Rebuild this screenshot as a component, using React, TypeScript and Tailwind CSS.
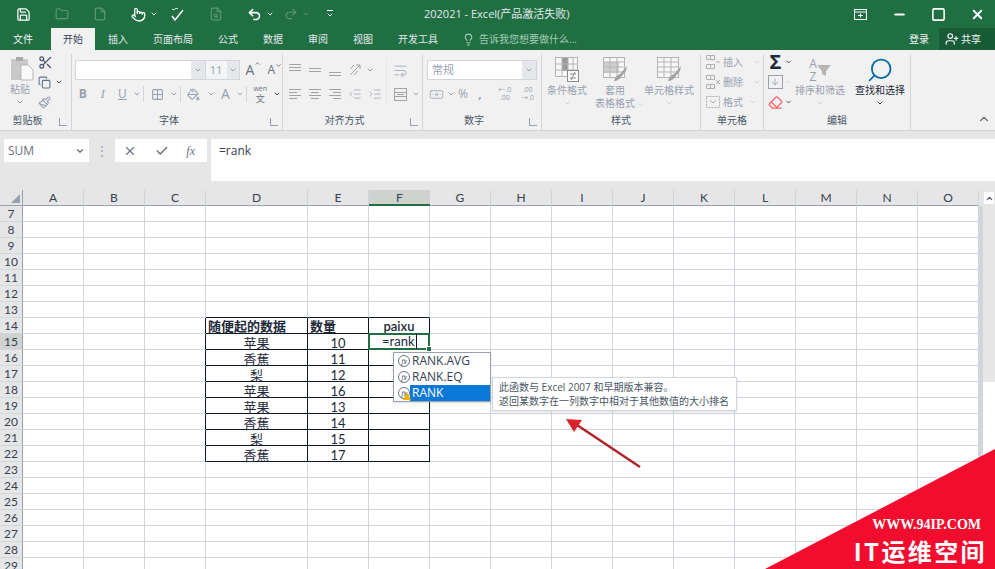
import React from 'react';
import {
  Save, Folder, File, Pointer, FileSearch, Undo2, Redo2, ChevronDown, Lightbulb, Minus, Square, X,
  UserPlus, Scissors, Copy, Paintbrush, Grid2x2, PaintBucket, Indent, Outdent, WrapText, Banknote, Check,
  Eraser, Search, ChevronUp, ArrowDown,
} from 'lucide-react';

const font = { fontFamily: '"Open Sans", "Noto Sans CJK SC", sans-serif' };
const sheetFont = { fontFamily: 'Lato, "Noto Sans CJK SC", sans-serif' };

const columns = ['A', 'B', 'C', 'D', 'E', 'F', 'G', 'H', 'I', 'J', 'K', 'L', 'M', 'N', 'O'];
const rows = Array.from({ length: 23 }, (_, i) => i + 7);

const tableData: Record<number, string[]> = {
  14: ['随便起的数据', '数量', 'paixu'],
  15: ['苹果', '10', ''],
  16: ['香蕉', '11', ''],
  17: ['梨', '12', ''],
  18: ['苹果', '16', ''],
  19: ['苹果', '13', ''],
  20: ['香蕉', '14', ''],
  21: ['梨', '15', ''],
  22: ['香蕉', '17', ''],
};

const tabs = ['插入', '页面布局', '公式', '数据', '审阅', '视图', '开发工具'];

function Caret({ className = 'text-gray-400' }: { className?: string }) {
  return <ChevronDown size={8} strokeWidth={3} className={className} />;
}

// small horizontal line icon used by the alignment buttons
function Lines({ items }: { items: number[][] }) {
  return (
    <svg width="14" height="14" viewBox="0 0 14 14" stroke="#a3a3a3" strokeWidth="1">
      {items.map(([x1, x2, y]) => (
        <line key={`${x1}-${x2}-${y}`} x1={x1} x2={x2} y1={y} y2={y} />
      ))}
    </svg>
  );
}

function PasteIcon() {
  return (
    <svg width="24" height="25" viewBox="0 0 24 25">
      <rect x="1" y="3" width="17" height="21" fill="#c9c9c9" />
      <rect x="6" y="1" width="7" height="4" fill="#a9a9a9" />
      <path d="M11 9h7l5 5v10H11z" fill="#fafafa" stroke="#b5b5b5" />
    </svg>
  );
}

function CondIcon() {
  return (
    <svg width="26" height="27" viewBox="0 0 26 27" stroke="#b5b5b5" fill="none">
      <rect x="1.5" y="1.5" width="22" height="19" fill="#f7f7f7" />
      <rect x="8" y="2" width="6" height="13" fill="#9a9a9a" stroke="none" />
      <path d="M8 1.5v19M14 1.5v19M19 1.5v19M1.5 8h22M1.5 14h22" />
      <rect x="13.5" y="14.5" width="11" height="11" fill="#fafafa" stroke="#8c8c8c" />
      <path d="M16 18h6M16 22h6M21 16l-4 8" stroke="#8c8c8c" />
    </svg>
  );
}

function StyleIcon({ filled = false }: { filled?: boolean }) {
  return (
    <svg width="26" height="27" viewBox="0 0 26 27" stroke="#b5b5b5" fill="none">
      <rect x="1.5" y="1.5" width="21" height="20" fill="#f7f7f7" />
      {filled && <rect x="2" y="6" width="15" height="11" fill="#cfcfcf" stroke="none" />}
      <path d="M1.5 6h21M1.5 11h21M1.5 16h21M8 1.5v20M15 1.5v20" />
      <path d="M12 25c1-4 3-6 6-7l7-8-1 5-5 6c-1 2-4 4-7 4z" fill="#a3a3a3" stroke="none" />
    </svg>
  );
}

function CellIcon({ mark }: { mark: 'insert' | 'delete' | 'format' }) {
  return (
    <svg width="16" height="16" viewBox="0 0 16 16" stroke="#b0b0b0" fill="none">
      {mark === 'format' ? (
        <>
          <rect x="1.5" y="2.5" width="13" height="11" strokeDasharray="2 1" />
          <path d="M5 6l3 3 3-3" />
        </>
      ) : (
        <>
          <path d="M1.5 1.5h8v4h-8zM5.5 1.5v4M1.5 10.5h8v4h-8zM5.5 10.5v4" />
          {mark === 'insert' ? <path d="M11 8h4" /> : <path d="M11 6l4 4M15 6l-4 4" />}
        </>
      )}
    </svg>
  );
}

function TitleBar() {
  return (
    <div className="flex h-7 items-center bg-[#1f6f43] text-white">
      <div className="flex w-96 items-center">
        <Save size={15} className="ml-4" />
        <Folder size={14} className="ml-6 text-[#5b9877]" />
        <File size={14} className="ml-6 text-[#5b9877]" />
        <Pointer size={15} className="ml-6" />
        <Caret className="ml-1 text-white" />
        <svg width="15" height="15" viewBox="0 0 15 15" fill="none" stroke="currentColor" strokeWidth="1.5" className="ml-3">
          <path d="M2 9l3 4 8-10" />
          <path d="M2 3c1-2 2 1 3-1s2 1 3-1" strokeWidth="1" />
        </svg>
        <FileSearch size={14} className="ml-6 text-[#5b9877]" />
        <Undo2 size={15} strokeWidth={2.5} className="ml-6" />
        <Caret className="ml-1 text-white" />
        <Redo2 size={14} className="ml-2.5 text-[#5b9877]" />
        <Caret className="ml-1 text-[#5b9877]" />
        <span className="ml-4 flex flex-col items-center">
          <span className="h-px w-1.5 bg-white" />
          <Caret className="text-white" />
        </span>
      </div>
      <div className="flex-1 pl-10 text-[11px] text-gray-200">202021 - Excel(产品激活失败)</div>
      <div className="flex items-center gap-6 pr-2.5">
        <svg width="15" height="15" viewBox="0 0 15 15" fill="none" stroke="currentColor">
          <rect x="1.5" y="2.5" width="12" height="10" />
          <path d="M1.5 5h12M5 8.5h5M7.5 6.5v4" />
        </svg>
        <Minus size={15} strokeWidth={3} />
        <Square size={15} strokeWidth={2.5} />
        <X size={15} strokeWidth={3} />
      </div>
    </div>
  );
}

function TabBar() {
  return (
    <div className="flex h-[22px] bg-[#1f6f43] text-[10px] text-gray-100">
      <span className="ml-px flex items-center px-3">文件</span>
      <span className="ml-1.5 flex items-center bg-[#f1f1f1] px-3 text-gray-700">开始</span>
      {tabs.map((t) => (
        <span key={t} className="ml-px flex items-center px-3 text-gray-200">{t}</span>
      ))}
      <span className="ml-3 flex items-center gap-1 text-[#a5cbb5]">
        <Lightbulb size={13} />
        告诉我您想要做什么...
      </span>
      <span className="ml-auto flex items-center pr-2.5">登录</span>
      <span className="flex w-14 items-center gap-0.5 bg-[#185c37] pl-1.5">
        <UserPlus size={14} />
        共享
      </span>
    </div>
  );
}

function Group({ width, label, launcher = false, children }: { width: string; label: string; launcher?: boolean; children: React.ReactNode }) {
  return (
    <div className={`flex shrink-0 flex-col border-r border-gray-300 ${width}`}>
      <div className="h-14">{children}</div>
      <div className={`relative flex h-5 items-center justify-center text-[10px] text-gray-600 ${launcher ? 'pr-4' : ''}`}>
        {label}
        {launcher && <span className="absolute right-1 bottom-1 h-2 w-2 border-b border-l border-gray-400" />}
      </div>
    </div>
  );
}

function BigButton({ icon, lines, className = '', dark = false }: { icon: React.ReactNode; lines: string[]; className?: string; dark?: boolean }) {
  const twoLines = lines.length > 1;
  return (
    <div className={`flex flex-col items-center pt-0.5 text-[10px] leading-[13px] whitespace-nowrap ${dark ? 'text-gray-800' : 'text-gray-400'} ${className}`}>
      <div className="flex h-[27px] items-center">{icon}</div>
      <div className="mt-px flex flex-col items-center">
        {lines.map((l, i) => (
          <span key={l} className="relative">
            {l}
            {twoLines && i === 1 && <Caret className="absolute top-1 -right-2.5 text-gray-300" />}
          </span>
        ))}
      </div>
      {!twoLines && <Caret className={dark ? 'mt-0.5 text-gray-700' : 'mt-0.5 text-gray-300'} />}
    </div>
  );
}

function Ribbon() {
  const slot = 'flex w-5 items-center justify-center';
  const smallCaret = 'flex w-2.5 items-center justify-center';
  return (
    <div className="flex h-[81px] border-b border-gray-300 bg-[#f1f1f1] pt-1 text-gray-400">
      <Group width="w-[72px]" label="剪贴板" launcher>
        <div className="flex pl-2.5 pt-0.5">
          <div className="flex w-7 flex-col items-start text-[10px] leading-[13px]">
            <PasteIcon />
            <span className="mt-0.5">粘贴</span>
            <Caret className="mt-0.5 ml-1.5 text-gray-400" />
          </div>
          <div className="-mt-1 flex flex-col">
            <span className="flex h-5 items-center"><Scissors size={15} className="text-slate-600" /></span>
            <span className="flex h-5 items-center gap-1"><Copy size={13} className="text-slate-500" /><Caret className="text-gray-600" /></span>
            <span className="flex h-5 items-center"><Paintbrush size={13} /></span>
          </div>
        </div>
      </Group>

      <Group width="w-[211px]" label="字体" launcher>
        <div className="flex flex-col gap-1 pt-1.5">
          <div className="flex h-5 items-center pl-[3px]">
            <span className="flex h-5 w-[132px] justify-end border border-gray-300 bg-white">
              <span className="flex w-3.5 items-center justify-center bg-gray-200"><Caret /></span>
            </span>
            <span className="flex h-5 w-[34px] items-center justify-between border-y border-r border-gray-300 bg-gray-100 pl-1 text-[11px]">
              11
              <span className="flex h-full w-3 items-center justify-center bg-gray-200"><Caret /></span>
            </span>
            <span className="ml-1.5 flex text-sm text-gray-500">A<ChevronUp size={7} strokeWidth={3} /></span>
            <span className="ml-1.5 flex text-xs text-gray-500">A<ChevronDown size={7} strokeWidth={3} /></span>
          </div>
          <div className="flex h-5 items-center pl-px text-xs text-gray-400">
            <b className={slot}>B</b>
            <i className={slot} style={{ fontFamily: '"Liberation Serif", serif' }}>I</i>
            <u className={slot}>U</u>
            <span className={smallCaret}><Caret /></span>
            <span className="mx-px h-4 border-l border-gray-300" />
            <span className="flex w-6 items-center justify-center"><Grid2x2 size={13} /></span>
            <span className={smallCaret}><Caret /></span>
            <span className="mx-px h-4 border-l border-gray-300" />
            <span className="flex w-6 items-center justify-center"><PaintBucket size={13} /></span>
            <span className={smallCaret}><Caret /></span>
            <span className={`${slot} text-sm`}>A</span>
            <span className={smallCaret}><Caret /></span>
            <span className="mx-px h-4 border-l border-gray-300" />
            <span className="flex w-6 flex-col items-center text-[7px] leading-[9px] text-gray-500">wén<span className="text-[9px] leading-[11px]">文</span></span>
            <span className={smallCaret}><Caret className="text-gray-600" /></span>
          </div>
        </div>
      </Group>

      <Group width="w-[140px]" label="对齐方式" launcher>
        <div className="flex pl-0.5 pt-1.5">
          <div className="flex flex-col gap-1">
            <div className="flex h-5 items-center">
              <span className={slot}><Lines items={[[1, 13, 1.5], [1, 13, 4.5], [1, 13, 7.5]]} /></span>
              <span className={slot}><Lines items={[[1, 13, 5.5], [1, 13, 8.5]]} /></span>
              <span className={slot}><Lines items={[[1, 13, 9.5], [1, 13, 12.5]]} /></span>
              <span className={slot}>
                <svg width="14" height="14" viewBox="0 0 14 14" stroke="#a3a3a3" fill="none">
                  <path d="M2 12L12 2M8 2h4v4" />
                  <path d="M2 6l4-4M6 12l4-4" />
                </svg>
              </span>
              <span className={smallCaret}><Caret /></span>
            </div>
            <div className="flex h-5 items-center">
              <span className={slot}><Lines items={[[1, 13, 2.5], [1, 9, 5.5], [1, 13, 8.5], [1, 9, 11.5]]} /></span>
              <span className={slot}><Lines items={[[1, 13, 2.5], [3, 11, 5.5], [1, 13, 8.5], [3, 11, 11.5]]} /></span>
              <span className={slot}><Lines items={[[1, 13, 2.5], [5, 13, 5.5], [1, 13, 8.5], [5, 13, 11.5]]} /></span>
              <span className={slot}><Outdent size={14} strokeWidth={1.25} /></span>
              <span className={slot}><Indent size={14} strokeWidth={1.25} /></span>
            </div>
          </div>
          <div className="ml-px flex flex-col gap-1 border-l border-gray-200 pl-1.5">
            <span className="flex h-5 items-center"><WrapText size={15} strokeWidth={1.25} /></span>
            <span className="flex h-5 items-center gap-1">
              <svg width="15" height="15" viewBox="0 0 15 15" stroke="#a3a3a3" fill="none">
                <rect x="1.5" y="1.5" width="12" height="12" />
                <path d="M1.5 5.5h12M1.5 9.5h12M4 7.5h7" />
              </svg>
              <Caret />
            </span>
          </div>
        </div>
      </Group>

      <Group width="w-[119px]" label="数字" launcher>
        <div className="flex flex-col gap-1 px-1 pt-1.5">
          <div className="flex h-5 items-center justify-between border border-gray-300 bg-white pl-1 text-[11px]">
            常规
            <span className="flex h-full w-3.5 items-center justify-center bg-gray-200"><Caret /></span>
          </div>
          <div className="flex h-5 items-center text-sm whitespace-nowrap">
            <span className={slot}><Banknote size={15} strokeWidth={1.25} /></span>
            <span className={smallCaret}><Caret /></span>
            <span className="w-4 text-center text-xs">%</span>
            <span className={`${slot} text-xs font-bold`}>,</span>
            <span className="ml-1.5 w-5 text-center text-[7px] leading-[8px]">←.0<br />.00</span>
            <span className="ml-1 w-5 text-center text-[7px] leading-[8px]">.00<br />→.0</span>
          </div>
        </div>
      </Group>

      <Group width="w-[159px]" label="样式">
        <div className="flex">
          <BigButton className="ml-px w-12" icon={<CondIcon />} lines={['条件格式']} />
          <BigButton className="w-12" icon={<StyleIcon filled />} lines={['套用', '表格格式']} />
          <BigButton className="ml-0.5 w-14" icon={<StyleIcon />} lines={['单元格样式']} />
        </div>
      </Group>

      <Group width="w-[63px]" label="单元格">
        <div className="-mt-0.5 flex flex-col pl-1 text-[10px] whitespace-nowrap">
          <span className="flex h-5 items-center gap-0.5"><CellIcon mark="insert" />插入<Caret className="ml-2 text-gray-300" /></span>
          <span className="flex h-5 items-center gap-0.5"><CellIcon mark="delete" />删除<Caret className="ml-2 text-gray-300" /></span>
          <span className="flex h-5 items-center gap-0.5"><CellIcon mark="format" />格式<Caret className="ml-1 text-gray-300" /></span>
        </div>
      </Group>

      <Group width="w-[147px]" label="编辑">
        <div className="flex">
          <div className="-mt-0.5 flex w-7 flex-col">
            <span className="flex h-5 items-center gap-0.5 pl-1">
              <span className="w-4 text-center text-xl leading-5 font-bold text-gray-800">Σ</span>
              <Caret className="text-gray-700" />
            </span>
            <span className="flex h-5 items-center gap-0.5 pl-1">
              <span className="flex h-3.5 w-4 items-center justify-center border border-gray-400"><ArrowDown size={10} /></span>
              <Caret className="text-gray-300" />
            </span>
            <span className="flex h-5 items-center gap-0.5 pl-1">
              <span className="flex w-4 justify-center"><Eraser size={15} className="text-red-400" /></span>
              <Caret className="text-gray-700" />
            </span>
          </div>
          <BigButton
            className="w-14"
            icon={
              <span className="flex items-center">
                <span className="text-center text-xs leading-[13px]">A<br />Z</span>
                <svg width="14" height="14" viewBox="0 0 14 14"><path d="M0 2h14L9 8v5l-4-2V8z" fill="#b5b5b5" /></svg>
              </span>
            }
            lines={['排序和筛选']}
          />
          <BigButton
            dark
            className="ml-1 w-14"
            icon={<Search size={28} strokeWidth={1.5} className="-scale-x-100 text-sky-700" />}
            lines={['查找和选择']}
          />
        </div>
      </Group>

      <div className="flex flex-1 items-end justify-end p-1">
        <ChevronUp size={14} className="text-gray-500" />
      </div>
    </div>
  );
}

function FormulaBar() {
  return (
    <div className="flex h-[59px] items-start gap-1 bg-[#e6e6e6] pl-1 pt-2">
      <div className="flex h-[23px] w-[85px] items-center justify-between bg-white pl-1 pr-1 text-xs text-gray-500">
        SUM
        <ChevronDown size={10} strokeWidth={3} />
      </div>
      <div className="flex h-[23px] w-[18px] items-center justify-center text-xs text-gray-400">⋮</div>
      <div className="flex h-[23px] w-[92px] items-center justify-between bg-white pl-2 pr-3 text-gray-500">
        <X size={14} />
        <Check size={14} strokeWidth={2.5} />
        <span className="text-xs italic" style={{ fontFamily: '"Liberation Serif", serif' }}>fx</span>
      </div>
      <div className="h-[42px] flex-1 bg-white pl-2 pt-0.5 text-xs leading-5 text-gray-700">=rank</div>
    </div>
  );
}

function cellBorder(row: number, col: number) {
  const inTable = row >= 14 && row <= 22 && col >= 3 && col <= 5;
  const aboveTable = row === 13 && col >= 3 && col <= 5;
  const leftOfTable = row >= 14 && row <= 22 && col === 2;
  const right = inTable || leftOfTable ? 'border-r-gray-900' : 'border-r-gray-300';
  const bottom = inTable || aboveTable ? 'border-b-gray-900' : 'border-b-gray-300';
  return `${right} ${bottom}`;
}

function Sheet() {
  return (
    <div className="relative flex-1 overflow-hidden bg-white" style={sheetFont}>
      <div className="grid auto-rows-[16px] grid-cols-[23px_repeat(3,61px)_102px_repeat(11,61px)_16px] text-gray-800">
        <div className="relative border-r border-b border-gray-400 bg-[#e6e6e6]">
          <span className="absolute right-0.5 bottom-0.5 h-0 w-0 border-b-[9px] border-l-[9px] border-b-gray-400 border-l-transparent" />
        </div>
        {columns.map((c) => (
          <div
            key={c}
            className={
              c === 'F'
                ? 'border-b-2 border-[#1f6f43] bg-[#cfd2cf] text-center text-xs leading-4 text-gray-700'
                : 'border-r border-b border-r-gray-300 border-b-gray-400 bg-[#e6e6e6] text-center text-xs leading-4 text-gray-700'
            }
          >
            {c}
          </div>
        ))}
        <div className="flex justify-center bg-[#e6e6e6] pt-0.5 pl-1">
          <span className="flex h-3 w-2.5 items-center justify-center bg-white">
            <ChevronUp size={9} strokeWidth={3} className="text-gray-600" />
          </span>
        </div>
        {rows.map((row) => (
          <React.Fragment key={row}>
            <div
              className={
                row === 15
                  ? 'border-r border-b border-r-gray-400 border-b-gray-300 bg-[#cfd2cf] text-center text-xs leading-4 text-gray-700'
                  : 'border-r border-b border-r-gray-400 border-b-gray-300 bg-[#e6e6e6] text-center text-xs leading-4 text-gray-700'
              }
            >
              {row}
            </div>
            {columns.map((_, col) => {
              const values = tableData[row];
              let text = '';
              let align = 'text-center';
              if (values && col >= 3 && col <= 5) {
                text = values[col - 3];
                if (row === 14 && col < 5) align = 'pl-0.5 text-left';
              }
              return (
                <div
                  key={col}
                  className={`relative border-r border-b whitespace-nowrap ${cellBorder(row, col)} ${align} ${row === 14 ? 'font-semibold' : 'pt-px'} text-[13px] leading-4`}
                >
                  {text}
                  {row === 15 && col === 5 && (
                    <div className="absolute -top-px -left-px z-10 h-[17px] w-[62px] border-2 border-[#1f6f43] pl-3 text-left text-[13px] leading-[13px]">
                      =rank<span className="ml-px border-l border-gray-900" />
                      <span className="absolute -right-1 -bottom-1 h-1.5 w-1.5 border border-white bg-[#1f6f43]" />
                    </div>
                  )}
                </div>
              );
            })}
            <div className="border-l-4 border-gray-300 bg-white" />
          </React.Fragment>
        ))}
      </div>

      {/* scrollbar thumb */}
      <div className="absolute top-4 right-0 h-44 w-3 bg-[#e6e6e6]" />

      {/* function autocomplete */}
      <div className="absolute top-[162px] left-[393px] z-20 w-[98px] border border-gray-400 bg-white text-xs leading-4 text-gray-700 shadow-sm" style={font}>
        {['RANK.AVG', 'RANK.EQ', 'RANK'].map((name) => (
          <div key={name} className="flex h-4 items-center">
            <span className="relative ml-1 flex h-3 w-3 shrink-0 items-center justify-center rounded-full border border-gray-500 text-[7px] italic leading-none">
              fx
              {name === 'RANK' && (
                <svg className="absolute -right-0.5 -bottom-0.5" width="8" height="8" viewBox="0 0 8 8">
                  <path d="M4 0l4 8H0z" fill="#eab308" />
                </svg>
              )}
            </span>
            <span className={name === 'RANK' ? 'flex h-4 flex-1 items-center bg-[#0a78d7] pl-0.5 text-white' : 'pl-0.5'}>{name}</span>
          </div>
        ))}
      </div>

      {/* tooltip */}
      <div className="absolute top-[187px] left-[492px] z-20 w-[245px] border border-gray-300 bg-white px-1.5 py-0.5 text-[10px] leading-[14px] whitespace-nowrap text-gray-600 shadow" style={font}>
        <div>此函数与 Excel 2007 和早期版本兼容。</div>
        <div>返回某数字在一列数字中相对于其他数值的大小排名</div>
      </div>

      {/* annotation arrow */}
      <svg className="absolute top-[225px] left-[560px] z-20 h-[60px] w-[90px]" viewBox="0 0 90 60">
        <line x1="80" y1="52" x2="14" y2="8" stroke="#b3222a" strokeWidth="2.5" />
        <polygon points="6,4 22,5 14,17" fill="#d8232a" />
      </svg>

      {/* watermark */}
      <svg className="absolute right-0 bottom-0 z-30 h-[120px] w-[230px]" viewBox="0 0 230 120">
        <polygon points="230,0 230,120 0,120" fill="#f20d2e" />
      </svg>
      <div className="absolute right-2 bottom-0.5 z-40 flex flex-col items-end text-white">
        <div className="mr-1.5 text-sm leading-5 font-bold" style={{ fontFamily: '"Liberation Serif", serif' }}>WWW.94IP.COM</div>
        <div className="text-2xl leading-8 font-bold tracking-widest" style={{ fontFamily: '"Noto Sans CJK SC", sans-serif' }}>IT运维空间</div>
      </div>
    </div>
  );
}

export default function App() {
  return (
    <div className="flex h-screen flex-col overflow-hidden" style={font}>
      <TitleBar />
      <TabBar />
      <Ribbon />
      <FormulaBar />
      <Sheet />
    </div>
  );
}
